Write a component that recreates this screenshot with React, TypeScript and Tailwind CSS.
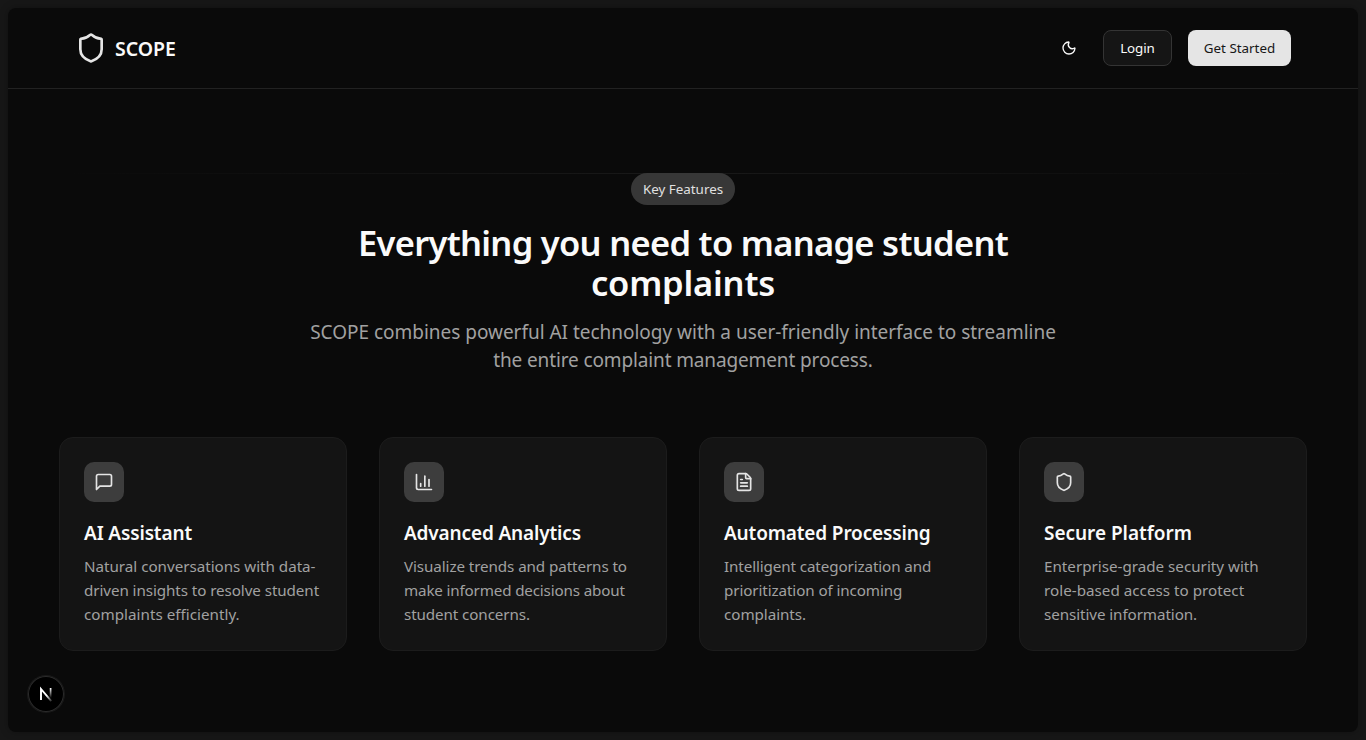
import { FileText, Moon, Shield } from "lucide-react";
import type { ReactNode } from "react";

const stroke = {
  fill: "none",
  stroke: "currentColor",
  strokeWidth: 2,
  strokeLinecap: "round" as const,
  strokeLinejoin: "round" as const,
};

function ChartIcon() {
  return (
    <svg viewBox="0 0 24 24" className="size-5" {...stroke}>
      <path d="M3 3v16a2 2 0 0 0 2 2h16" />
      <path d="M18 17V9" />
      <path d="M13 17V5" />
      <path d="M8 17v-3" />
    </svg>
  );
}

function MessageIcon() {
  return (
    <svg viewBox="0 0 24 24" className="size-5" {...stroke}>
      <path d="M21 15a2 2 0 0 1-2 2H7l-4 4V5a2 2 0 0 1 2-2h14a2 2 0 0 1 2 2z" />
    </svg>
  );
}

interface Line {
  text: string;
  tracking: string;
}

interface Feature {
  icon: ReactNode;
  title: Line;
  lines: Line[];
}

const features: Feature[] = [
  {
    icon: <MessageIcon />,
    title: { text: "AI Assistant", tracking: "tracking-[-0.14px]" },
    lines: [
      { text: "Natural conversations with data-", tracking: "tracking-[-0.02px]" },
      { text: "driven insights to resolve student", tracking: "tracking-[-0.08px]" },
      { text: "complaints efficiently.", tracking: "tracking-[0.02px]" },
    ],
  },
  {
    icon: <ChartIcon />,
    title: { text: "Advanced Analytics", tracking: "tracking-[-0.15px]" },
    lines: [
      { text: "Visualize trends and patterns to", tracking: "tracking-[-0.09px]" },
      { text: "make informed decisions about", tracking: "tracking-[-0.16px]" },
      { text: "student concerns.", tracking: "tracking-[-0.1px]" },
    ],
  },
  {
    icon: <FileText className="size-5" />,
    title: { text: "Automated Processing", tracking: "tracking-[-0.15px]" },
    lines: [
      { text: "Intelligent categorization and", tracking: "tracking-[-0.11px]" },
      { text: "prioritization of incoming", tracking: "tracking-[-0.1px]" },
      { text: "complaints.", tracking: "tracking-[-0.05px]" },
    ],
  },
  {
    icon: <Shield className="size-5" />,
    title: { text: "Secure Platform", tracking: "tracking-[-0.03px]" },
    lines: [
      { text: "Enterprise-grade security with", tracking: "tracking-[0px]" },
      { text: "role-based access to protect", tracking: "tracking-[0.02px]" },
      { text: "sensitive information.", tracking: "tracking-[-0.08px]" },
    ],
  },
];

function FeatureCard({ icon, title, lines }: Feature) {
  return (
    <article className="h-[214px] rounded-[14px] border border-[#1c1c1c] bg-[#141414] p-6 whitespace-nowrap">
      <div className="flex size-10 items-center justify-center rounded-[10px] bg-[#3d3d3d] text-[#e5e5e5]">{icon}</div>
      <h3 className={`mt-[17px] text-[19px] leading-7 font-semibold text-[#fafafa] ${title.tracking}`}>{title.text}</h3>
      <div className="mt-[7px] text-[15.2px] leading-6 text-[#a1a1a1]">
        {lines.map((line) => (
          <p key={line.text} className={line.tracking}>
            {line.text}
          </p>
        ))}
      </div>
    </article>
  );
}

export default function App() {
  return (
    <div className="h-[740px] w-full overflow-hidden bg-[#171717] p-2 font-['Noto_Sans',sans-serif]">
      <div className="relative h-full overflow-hidden rounded-lg bg-[#0a0a0a] shadow-[0_0_8px_rgba(0,0,0,0.3)]">
        <header className="flex h-[81px] items-center justify-between border-b border-[#222222] px-[67px]">
          <div className="flex items-center gap-2 text-[#e5e5e5]">
            <Shield className="size-8" />
            <span className="pt-0.5 text-[19.5px] leading-7 font-semibold tracking-[0px] text-[#fafafa]">SCOPE</span>
          </div>
          <div className="flex items-center gap-4 text-[13.4px] text-[#fafafa]">
            <button className="flex size-9 items-center justify-center">
              <Moon className="size-4" />
            </button>
            <button className="h-9 w-[69px] rounded-lg border border-[#343434] bg-[#151515] tracking-[-0.1px]">
              Login
            </button>
            <button className="h-9 w-[103px] rounded-lg bg-[#e5e5e5] whitespace-nowrap text-[#171717]">
              Get Started
            </button>
          </div>
        </header>

        <main className="mt-[84px]">
          <div className="mx-auto h-px w-[1248px] bg-linear-to-r from-transparent via-[#191919] to-transparent" />
          <section className="-mt-px flex flex-col items-center text-center whitespace-nowrap">
            <div className="flex h-8 w-[104px] items-center justify-center rounded-full bg-[#373737] text-[13.4px] text-[#e0e0e0]">
              Key Features
            </div>
            <h2 className="mt-[18px] text-[34.5px] leading-10 font-semibold text-[#fafafa]">
              <span className="block tracking-[-0.7px]">Everything you need to manage student</span>
              <span className="block tracking-[-0.2px]">complaints</span>
            </h2>
            <p className="mt-[15px] text-[19px] leading-7 text-[#a1a1a1]">
              <span className="block tracking-[-0.02px]">
                SCOPE combines powerful AI technology with a user-friendly interface to streamline
              </span>
              <span className="block tracking-[-0.13px]">the entire complaint management process.</span>
            </p>
          </section>
          <section className="mx-auto mt-[63px] grid w-[1248px] grid-cols-4 gap-8">
            {features.map((feature) => (
              <FeatureCard key={feature.title.text} {...feature} />
            ))}
          </section>
        </main>

        <button
          aria-label="Open developer tools"
          className="absolute bottom-5 left-5 flex size-9 items-center justify-center rounded-full bg-black shadow-[0_0_0_1px_#1a1a1a,inset_0_0_0_1px_#2b2b2b]"
        >
          <svg viewBox="0 0 36 36" className="size-9" fill="none">
            <defs>
              <linearGradient id="diagonal" x1="19" y1="19" x2="24.5" y2="26" gradientUnits="userSpaceOnUse">
                <stop stopColor="#fff" />
                <stop offset="1" stopColor="#fff" stopOpacity="0" />
              </linearGradient>
              <linearGradient id="stem" x1="23" y1="12" x2="23" y2="22" gradientUnits="userSpaceOnUse">
                <stop stopColor="#fff" />
                <stop offset="1" stopColor="#fff" stopOpacity="0" />
              </linearGradient>
            </defs>
            <path d="M13 24V13L23.3 25.2" stroke="url(#diagonal)" strokeWidth="1.9" />
            <path d="M22.6 12V22" stroke="url(#stem)" strokeWidth="1.7" />
          </svg>
        </button>
      </div>
    </div>
  );
}
